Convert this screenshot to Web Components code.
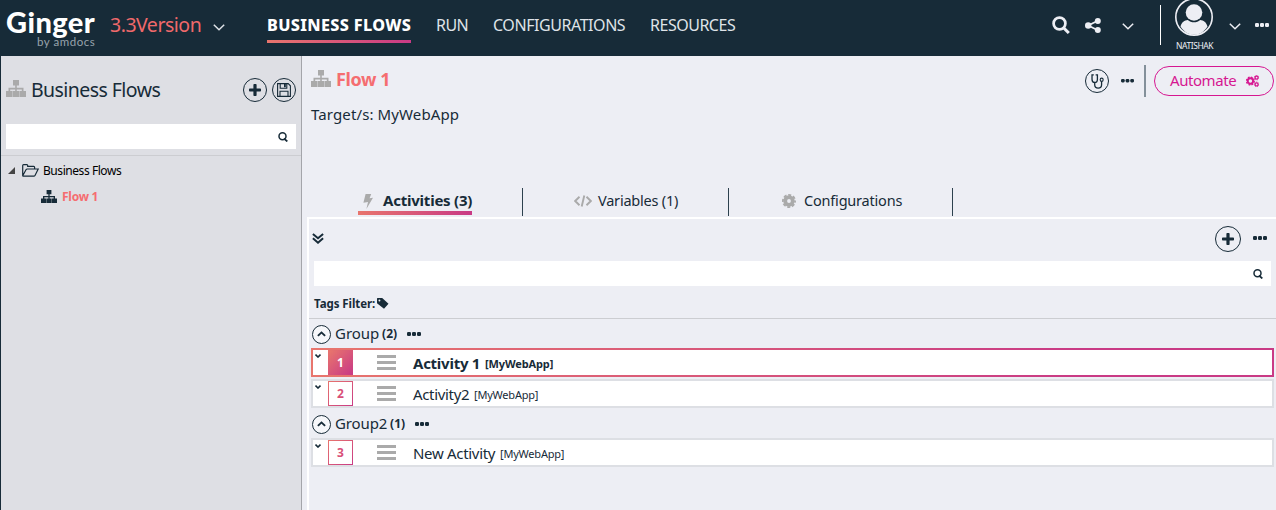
<!DOCTYPE html>
<html lang="en">
<head>
<meta charset="utf-8">
<title>Ginger - Business Flows</title>
<style>
html,body{margin:0;height:100%;overflow:hidden}
body{font-family:"Noto Sans","Open Sans",sans-serif;color:#172b38;background:#edeef4}
</style>
</head>
<body>
<ginger-app></ginger-app>
<script>
const define = (name, css, html, setup) => {
  customElements.define(name, class extends HTMLElement {
    constructor() {
      super();
      const t = document.createElement('template');
      t.innerHTML = `<style>:host{display:block;box-sizing:border-box}*{box-sizing:border-box}${css}</style>${typeof html === 'function' ? html(this) : html}`;
      this.attachShadow({ mode: 'open' }).append(t.content.cloneNode(true));
    }
    connectedCallback() { if (setup) setup(this); }
  });
};

const icons = {
  sitemap: ['0 0 20 17', '<path d="M7 0h6v5.500h-2.200v2.200h6.700v3.300H20v6h-6.400v-6h2.200V9.400h-5V11h2.400v6H6.800v-6h2.400V9.400h-5V11h2.200v6H0v-6h2.500V7.700h6.700V5.500H7z"/>'],
  chevron: ['0 0 12 7', '<path d="M.8 .8 6 5.800 11.200 .8" fill="none" stroke="currentColor" stroke-width="1.500"/>'],
  up: ['0 0 8 6', '<path d="M.8 4.800 4 1.500 7.200 4.800" fill="none" stroke="currentColor" stroke-width="1.700"/>'],
  small: ['0 0 6 4', '<path d="M.5 .6 3 3 5.500 .6" fill="none" stroke="currentColor" stroke-width="1.600"/>'],
  search: ['0 0 18 18', '<circle cx="7.500" cy="7.500" r="5.900" fill="none" stroke="currentColor" stroke-width="2.700"/><path d="m11.800 12 5 5" stroke="currentColor" stroke-width="3"/>'],
  find: ['0 0 10 10', '<circle cx="4.500" cy="4.300" r="3.500" fill="none" stroke="currentColor" stroke-width="1.500"/><path d="m6 6.500 3.300 3" stroke="currentColor" stroke-width="1.700"/>'],
  share: ['0 0 16 15', '<path d="M12.800 2.800 3.200 7.500l9.600 4.700" fill="none" stroke="currentColor" stroke-width="1.800"/><circle cx="3.200" cy="7.500" r="3.200"/><circle cx="12.800" cy="3" r="3"/><circle cx="12.800" cy="12" r="3"/>'],
  dots: ['0 0 14 4', '<rect width="4" height="4" rx="1.300"/><rect x="5" width="4" height="4" rx="1.300"/><rect x="10" width="4" height="4" rx="1.300"/>'],
  user: ['0 0 38 38', '<circle cx="19" cy="19" r="18.200" fill="none" stroke="currentColor" stroke-width="1.600"/><circle cx="19" cy="14.500" r="8.300"/><path d="M5.500 28.500c1.200-4.500 4-6.300 7.300-6.600 3.500 3.200 9 3.200 12.400 0 3.300.3 6.100 2.100 7.300 6.600C29 34 24.500 36.800 19 36.800S9 34 5.500 28.500z"/>'],
  plus: ['0 0 12 12', '<path d="M5.200 0h1.600q.8 0 .8.8v3.600h3.600q.8 0 .8.8v1.600q0 .8-.8.8H7.600v3.600q0 .8-.8.8H5.200q-.8 0-.8-.8V7.600H.8Q0 7.600 0 6.800V5.200q0-.8.8-.8h3.600V.8q0-.8.8-.8z"/>'],
  save: ['0 0 14 14', '<path d="M.6 .6h10.600l2.200 2.200v10.600H.6zM3.200 .8v4.400h6.600V.8M3 13V8.300h8V13" fill="none" stroke="currentColor" stroke-width="1.100"/><path d="M7 1h1.800v3.300H7z"/>'],
  folder: ['0 0 17 13', '<path d="M.7 11.800V1.600q0-.9.9-.9h3.200q.9 0 .9.900v.8h6q.9 0 .9.900V5M.7 11.800 4 5.700q.4-.7 1.200-.7h11L13 11.400q-.4.800-1.200.800H1.200q-.5 0-.5-.4z" fill="none" stroke="currentColor" stroke-width="1.200"/>'],
  open: ['0 0 7 7', '<path d="M7 0v7H0z"/>'],
  bolt: ['0 0 10 15', '<path d="M2.600 0h5.600L6.600 4.300 10 3.700 3.400 15 5 8 .4 8.800z"/>'],
  code: ['0 0 18 12', '<path d="M5.500 1.800 1.200 6l4.300 4.200M12.500 1.800 16.800 6l-4.300 4.200M10.300.5 7.700 11.500" fill="none" stroke="currentColor" stroke-width="1.900"/>'],
  gear: ['0 0 14 14', '<g fill="none" stroke="currentColor"><circle cx="7" cy="7" r="3.800" stroke-width="3.800"/><circle cx="7" cy="7" r="6.100" stroke-width="1.800" stroke-dasharray="3 1.791" stroke-dashoffset="1.500"/></g>'],
  cogs: ['0 0 13 12', '<g fill="none" stroke="currentColor"><circle cx="4.400" cy="6" r="2.700" stroke-width="1.900"/><circle cx="4.400" cy="6" r="3.900" stroke-width="1.300" stroke-dasharray="1.800 1.263"/><circle cx="10.600" cy="2.600" r="1.500" stroke-width="1.300"/><circle cx="10.600" cy="9.400" r="1.500" stroke-width="1.300"/><circle cx="10.600" cy="2.600" r="2.300" stroke-width=".8" stroke-dasharray="1.100 .706"/><circle cx="10.600" cy="9.400" r="2.300" stroke-width=".8" stroke-dasharray="1.100 .706"/></g>'],
  steth: ['0 0 14 15', '<path d="M3 .9H1.100v4.400q0 3.200 2.900 3.200t2.900-3.200V.9H5M4 8.500v2.300q0 3.300 3.700 3.300t3.700-3.300V7.500" fill="none" stroke="currentColor" stroke-width="1.400"/><circle cx="11.500" cy="5.700" r="1.600" fill="none" stroke="currentColor" stroke-width="1.200"/>'],
  double: ['0 0 12 11', '<path d="M.9 .9 6 5.300 11.100.9M.9 5.300 6 9.700l5.100-4.400" fill="none" stroke="currentColor" stroke-width="2"/>'],
  tag: ['0 0 12 11', '<path fill-rule="evenodd" d="M.5 0h4.700L11.500 5.800 7 10.800 0 5.200V.5zM2.400 1.500a.9.9 0 1 0 .1 1.900.9.9 0 0 0-.1-1.900z"/>'],
  bars: ['0 0 19 15', '<path d="M0 0h19v3H0zM0 6h19v3H0zM0 12h19v3H0z"/>']
};
define('g-icon', ':host{flex:none;line-height:0}svg{display:block;width:100%;height:100%;fill:currentColor}',
  el => { const [vb, p] = icons[el.getAttribute('name')]; return `<svg viewBox="${vb}" preserveAspectRatio="none">${p}</svg>`; },
  el => { el.style.width = el.getAttribute('w') + 'px'; el.style.height = el.getAttribute('h') + 'px'; });

define('g-text', ':host{flex:none;white-space:nowrap;line-height:20px}span{display:inline-block}', '<span><slot></slot></span>', el => {
  const w = +el.getAttribute('w');
  el.style.width = w + 'px';
  el.style.fontSize = el.getAttribute('s') + 'px';
  const span = el.shadowRoot.querySelector('span');
  const natural = span.getBoundingClientRect().width;
  if (natural) span.style.letterSpacing = ((w + .2 - natural) / el.textContent.length) + 'px';
});

define('g-round', ':host{display:flex;flex:none;align-items:center;justify-content:center;border:1.4px solid #172b38;border-radius:50%}', '<slot></slot>',
  el => { el.style.width = el.style.height = el.getAttribute('d') + 'px'; });

define('g-search', ':host{display:flex;height:25px;background:#fff;align-items:center;justify-content:flex-end;padding-right:8px}', '<g-icon name="find" w="10" h="10"></g-icon>');

define('g-header', `:host{display:flex;height:56px;background:#172b38;color:#dfe3e8;align-items:center;padding:0 7px 6px 6px}
.brand{width:90px;height:50px;padding-top:7px;font-family:Lato,sans-serif;color:#fff}
.brand g-text:first-child{line-height:30px;font-weight:900}
.brand g-text:last-child{line-height:11px;color:#98a3ac;margin:-1px 0 0 31px}
.ver{color:#f0696b;margin-left:14px}
nav{display:flex;gap:25px;margin-left:42px;height:50px;align-items:center}
.on{padding-top:14px;height:50px}
.on g-text{color:#fff;font-weight:800;line-height:22px}
.on div{height:3px;margin-top:4px;background:linear-gradient(90deg,#e8756d,#c93a85)}
.tools{display:flex;align-items:center;margin-left:auto;color:#edeef4;height:50px}
.sep{width:1px;height:40px;background:#fff;margin:0 14px 0 26px}
.me{width:38px;height:52px;margin-top:-2px}.me g-text{line-height:11px;margin:4px 0 0 1px}`,
`<div class="brand"><g-text w="89" s="29">Ginger</g-text><g-text w="58" s="11.500">by amdocs</g-text></div>
<g-text class="ver" w="91" s="19.500">3.3Version</g-text><g-icon style="margin:4px 0 0 12px" name="chevron" w="12" h="7"></g-icon>
<nav><div class="on"><g-text w="144" s="16.200">BUSINESS FLOWS</g-text><div></div></div>
<g-text w="32" s="16">RUN</g-text><g-text w="132" s="16">CONFIGURATIONS</g-text><g-text w="85" s="16">RESOURCES</g-text></nav>
<div class="tools"><g-icon name="search" w="18" h="18"></g-icon><g-icon style="margin-left:15px" name="share" w="16" h="15"></g-icon><g-icon style="margin:2px 0 0 21px" name="chevron" w="12" h="7"></g-icon><div class="sep"></div>
<div class="me"><g-icon name="user" w="38" h="38"></g-icon><g-text w="37" s="8.500">NATISHAK</g-text></div><g-icon style="margin:2px 0 0 16px" name="chevron" w="12" h="7"></g-icon><g-icon style="margin-left:14px" name="dots" w="14" h="4"></g-icon></div>`);

define('g-sidebar', `:host{width:302px;flex:none;background:#dedfe4;border-left:1px solid #172b38;border-right:1px solid #a4a5aa}
.title{display:flex;align-items:center;height:68px;padding:0 5px}
.title g-icon[name=sitemap]{color:#aaa;margin-bottom:3px}
.title g-round+g-round{margin-left:5px}
g-search{margin:0 5px}
.tree{margin-top:6px;border-top:1px solid #cccdd1;padding-top:5px;color:#000}
.row{display:flex;align-items:center;height:20px;padding-left:7px}
.row+.row{margin-top:6px;padding-left:40px}`,
`<div class="title"><g-icon name="sitemap" w="20" h="17"></g-icon><g-text style="margin-left:5px" w="129" s="19.500">Business Flows</g-text>
<g-round style="margin-left:auto" d="24"><g-icon name="plus" w="12" h="12"></g-icon></g-round><g-round d="24"><g-icon name="save" w="14" h="14"></g-icon></g-round></div>
<g-search></g-search>
<div class="tree"><div class="row"><g-icon name="open" w="7" h="7" style="color:#444;margin-bottom:2px"></g-icon><g-icon style="margin:0 0 2px 7px;color:#172b38" name="folder" w="17" h="13"></g-icon><g-text style="margin-left:4px" w="78" s="12">Business Flows</g-text></div>
<div class="row"><g-icon name="sitemap" w="16" h="13" style="color:#172b38;margin-bottom:1px"></g-icon><g-text style="margin-left:5px;color:#f56d70;font-weight:700" w="36" s="12">Flow 1</g-text></div></div>`);

define('g-tab', `:host{display:flex;height:28px;align-items:center;border-right:1px solid #2d414e}
::slotted(g-icon){color:#aaa}.in{display:flex;align-items:center;height:26px;padding-bottom:4px;position:relative}
::slotted(g-icon){margin-top:2px}
:host([active]){font-weight:700}
:host([active]) .in:after{content:"";position:absolute;left:0;right:0;bottom:0;height:4px;background:linear-gradient(90deg,#e8756d,#c93a85)}`,
'<div class="in"><slot></slot></div>');

define('g-group', ':host{display:flex;align-items:center;height:30px;padding-left:3px}g-round{background:#f6f7fa;border-width:1.200px}g-text{margin-bottom:2px}.n{font-weight:700;margin:0 10px 0 3px}',
 el => `<g-round d="19"><g-icon name="up" w="9" h="6"></g-icon></g-round><g-text style="margin-left:4px" w="${el.getAttribute('w')}" s="15">${el.getAttribute('name')}</g-text><g-text class="n" w="15" s="12">(${el.getAttribute('count')})</g-text><g-icon name="dots" w="14" h="4"></g-icon>`);

define('g-activity', `:host{display:flex;height:29px;margin:0 2px;border:2px solid #dddfe4;background:#fff;align-items:center}
:host([active]){border-image:linear-gradient(90deg,#e8756d,#c93a85 80%) 1;font-weight:700}
.num{width:25px;height:25px;margin-left:7px;border:1px solid;border-image:linear-gradient(135deg,#e8756d,#c93a85) 1;display:flex;align-items:center;justify-content:center;font-weight:700;color:#d95078}
:host([active]) .num{background:linear-gradient(135deg,#e8756d,#c93a85);color:#fff}
.h{color:#aaa;margin:0 17px 0 24px}.c{align-self:flex-start;margin:4px 0 0 2px}.a{margin:3px 0 0 5px}.t{margin-top:1px}`,
 el => `<g-icon class="c" name="small" w="6" h="4"></g-icon><div class="num"><g-text w="7" s="12">${el.getAttribute('n')}</g-text></div><g-icon class="h" name="bars" w="19" h="15"></g-icon><g-text class="t" w="${el.getAttribute('w')}" s="15">${el.getAttribute('name')}</g-text><g-text class="a" w="${el.hasAttribute('active') ? 68 : 64}" s="11">[MyWebApp]</g-text>`);

define('g-main', `:host{flex:1;min-width:0;background:#edeef4}
.top{display:flex;align-items:center;height:50px;padding:0 2px 0 9px}
.name{color:#f56d70;font-weight:700;margin:0 0 4px 5px}
.bar{width:2px;height:32px;background:#84909a;margin:0 8px 0 10px}
.auto{display:flex;align-items:center;width:120px;height:30px;border:1.500px solid #d61791;border-radius:15px;color:#d61791;padding-left:15px}
.auto g-text{margin-bottom:2px}
.target{margin:-2px 0 0 9px}
.tabs{display:flex;margin-top:64px;padding-left:56px}
.panel{margin:1px 0 0 5px;border:2px solid #fff;border-width:2px 0 0 2px;height:294px}
.ctl{display:flex;align-items:center;height:42px;padding:0 9px 2px 4px}
.panel g-search{margin:0 5px}
.tags{display:flex;align-items:center;height:33px;padding:3px 0 0 5px;border-bottom:1px solid #cccdd1;font-weight:700}`,
`<div class="top"><g-icon name="sitemap" w="20" h="17" style="color:#aaa;margin-bottom:5px"></g-icon><g-text class="name" w="54" s="18">Flow 1</g-text>
<g-round d="24" style="margin-left:auto"><g-icon name="steth" w="13" h="15"></g-icon></g-round><g-icon style="margin-left:12px" name="dots" w="13" h="3.500"></g-icon><div class="bar"></div>
<div class="auto"><g-text w="66" s="15">Automate</g-text><g-icon style="margin-left:10px" name="cogs" w="13" h="12"></g-icon></div></div>
<g-text class="target" w="148" s="15">Target/s: MyWebApp</g-text>
<div class="tabs"><g-tab active style="width:165px"><g-icon style="margin-left:5px" name="bolt" w="10" h="15"></g-icon><g-text style="margin-left:10px" w="89" s="15">Activities (3)</g-text></g-tab>
<g-tab style="width:206px;padding-left:51px"><g-icon name="code" w="18" h="12"></g-icon><g-text style="margin-left:6px" w="80" s="14.500">Variables (1)</g-text></g-tab>
<g-tab style="width:224px;padding-left:53px"><g-icon name="gear" w="14" h="14"></g-icon><g-text style="margin-left:8px" w="98" s="14.500">Configurations</g-text></g-tab></div>
<div class="panel"><div class="ctl"><g-icon name="double" w="12" h="11" style="margin:0 0 2px -1px"></g-icon><g-round d="26" style="margin-left:auto"><g-icon name="plus" w="12" h="12"></g-icon></g-round><g-icon style="margin:0 0 2px 12px" name="dots" w="14" h="4"></g-icon></div>
<g-search></g-search><div class="tags"><g-text w="61" s="11.500">Tags Filter:</g-text><g-icon style="margin-left:2px" name="tag" w="12" h="11"></g-icon></div>
<g-group name="Group" count="2" w="44" style="height:29px;padding-top:1px"></g-group>
<g-activity active n="1" name="Activity 1" w="67"></g-activity>
<g-activity n="2" name="Activity2" w="56" style="margin-top:2px"></g-activity>
<g-group name="Group2" count="1" w="52" style="padding-top:2px"></g-group>
<g-activity n="3" name="New Activity" w="82"></g-activity></div>`);

define('ginger-app', ':host{display:flex;flex-direction:column;width:1276px;height:510px}main{display:flex;flex:1;min-height:0}', '<g-header></g-header><main><g-sidebar></g-sidebar><g-main></g-main></main>');
</script>
</body>
</html>
